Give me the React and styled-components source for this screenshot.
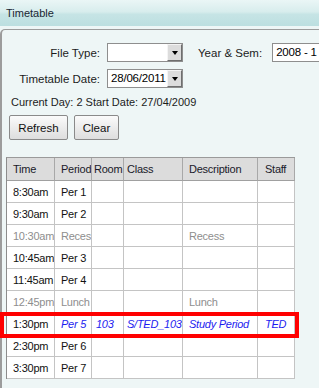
import styled, { createGlobalStyle } from 'styled-components';

const GlobalStyle = createGlobalStyle`
    html, body {
        margin: 0;
        padding: 0;
        background: #eef6f6;
        overflow: hidden;
    }
    body {
        font-family: "Liberation Sans", Arial, sans-serif;
        font-size: 11px;
        color: #1c1c1c;
    }
`;

const Page = styled.div`
    width: 319px;
    height: 388px;
    overflow: hidden;
`;

const TitleBar = styled.div`
    height: 26px;
    display: flex;
    align-items: center;
    padding-left: 6px;
    box-sizing: border-box;
    background: linear-gradient(#eaf6f6 0%, #d8eded 45%, #c6e4e5 55%, #bcdfe0 100%);
    color: #1a2633;
    font-size: 11px;
`;

const Panel = styled.div`
    margin-top: 3px;
    width: 360px;
    border: 1px solid #9c9c9c;
    border-left-width: 2px;
    border-right: none;
    border-bottom: none;
    border-radius: 5px 0 0 0;
    padding-top: 13px;
    height: 359px;
    box-sizing: border-box;
`;

const FormRow = styled.div`
    display: flex;
    align-items: center;
    gap: 7px;
    margin-bottom: 7px;
`;

const Label = styled.span`
    width: ${p => (p.$w ? `${p.$w}px` : 'auto')};
    text-align: right;
    margin-left: ${p => p.$ml || 0}px;
    margin-right: ${p => p.$mr || 0}px;
    white-space: nowrap;
    font-size: 11.5px;
`;

const SelectBox = styled.div`
    display: flex;
    width: ${p => p.$w}px;
    height: 19px;
    box-sizing: border-box;
    border: 1px solid #8e8e8e;
    background: #fff;
    flex-shrink: 0;
`;

const SelectValue = styled.div`
    flex: 1;
    padding-left: 3px;
    line-height: 17px;
    font-size: 11.5px;
    letter-spacing: -0.2px;
    color: #000;
    overflow: hidden;
    white-space: nowrap;
`;

const ArrowBtn = styled.div`
    width: 15px;
    box-sizing: border-box;
    border: 1px solid;
    border-color: #f4f4f4 #6e6e6e #6e6e6e #f4f4f4;
    background: #dcdcdc;
    display: flex;
    align-items: center;
    justify-content: center;

    &:after {
        content: "";
        border-left: 3.5px solid transparent;
        border-right: 3.5px solid transparent;
        border-top: 4px solid #000;
        margin-top: 1px;
    }
`;

const Select = ({ w, value }) => (
    <SelectBox $w={w}>
        <SelectValue>{value}</SelectValue>
        <ArrowBtn />
    </SelectBox>
);

const Info = styled.div`
    padding-left: 9px;
    margin-top: 7px;
    line-height: 14px;
    white-space: nowrap;
`;

const ButtonRow = styled.div`
    display: flex;
    gap: 6px;
    padding-left: 7px;
    margin-top: 6px;
`;

const Button = styled.button`
    height: 25px;
    width: ${p => p.$w}px;
    padding: 0;
    font-family: inherit;
    font-size: 11.5px;
    color: #111;
    border: 1px solid #8a8a8a;
    border-radius: 2px;
    background: linear-gradient(#fbfbfb, #ececec 50%, #dedede);
`;

const TableArea = styled.div`
    position: relative;
    margin-top: 17px;
`;

const TableClip = styled.div`
    margin-left: 4px;
    height: 222px;
    overflow: hidden;
`;

const Table = styled.table`
    border-collapse: separate;
    border-spacing: 0;
    table-layout: fixed;
    width: 289px;
    border-top: 1px solid #9a9a9a;
    border-left: 1px solid #8c8c8c;
    background: #fff;
`;

const Th = styled.th`
    height: 23px;
    box-sizing: border-box;
    padding: 0 0 0 ${p => p.$pad}px;
    text-align: left;
    font-weight: normal;
    font-size: 11px;
    letter-spacing: -0.25px;
    color: #1a1a2a;
    background: #dcdcdc;
    border-right: 1px solid #a8a8a8;
    border-bottom: 1px solid #a0a0a0;
    white-space: nowrap;
    overflow: hidden;
`;

const Td = styled.td`
    height: 22px;
    box-sizing: border-box;
    padding: 0 0 0 ${p => p.$pad}px;
    border-right: 1px solid #c4c4c4;
    border-bottom: 1px solid #c4c4c4;
    font-size: 11px;
    letter-spacing: -0.25px;
    white-space: nowrap;
    overflow: hidden;
    color: ${p => (p.$kind === 'break' ? '#8e8e8e' : p.$kind === 'class' ? '#1c1cf0' : '#111')};
    font-style: ${p => (p.$kind === 'class' ? 'italic' : 'normal')};
`;

const Highlight = styled.div`
    position: absolute;
    left: -2px;
    top: 155px;
    width: 299px;
    height: 26px;
    box-sizing: border-box;
    border: 4px solid #ff0000;
    pointer-events: none;
`;

const columns = [
    { title: 'Time', w: 48, head: 6, cell: 6 },
    { title: 'Period', w: 37, head: 6, cell: 6 },
    { title: 'Room', w: 32, head: 2, cell: 4 },
    { title: 'Class', w: 59, head: 3, cell: 3 },
    { title: 'Description', w: 75, head: 6, cell: 6 },
    { title: 'Staff', w: 37, head: 7, cell: 7 },
];

const rows = [
    ['8:30am', 'Per 1', '', '', '', ''],
    ['9:30am', 'Per 2', '', '', '', ''],
    ['10:30am', 'Recess', '', '', 'Recess', '', 'break'],
    ['10:45am', 'Per 3', '', '', '', ''],
    ['11:45am', 'Per 4', '', '', '', ''],
    ['12:45pm', 'Lunch', '', '', 'Lunch', '', 'break'],
    ['1:30pm', 'Per 5', '103', 'S/TED_103', 'Study Period', 'TED', 'class'],
    ['2:30pm', 'Per 6', '', '', '', ''],
    ['3:30pm', 'Per 7', '', '', '', ''],
];

const App = () => (
    <Page>
        <GlobalStyle />
        <TitleBar>Timetable</TitleBar>
        <Panel>
            <FormRow>
                <Label $w={98}>File Type:</Label>
                <Select w={76} value="" />
                <Label $ml={8} $mr={3}>Year &amp; Sem:</Label>
                <Select w={66} value="2008 - 1" />
            </FormRow>
            <FormRow>
                <Label $w={98}>Timetable Date:</Label>
                <Select w={76} value="28/06/2011" />
            </FormRow>
            <Info>Current Day: 2 Start Date: 27/04/2009</Info>
            <ButtonRow>
                <Button $w={59}>Refresh</Button>
                <Button $w={45}>Clear</Button>
            </ButtonRow>
            <TableArea>
                <TableClip>
                    <Table>
                        <colgroup>
                            {columns.map(c => <col key={c.title} style={{ width: c.w }} />)}
                        </colgroup>
                        <thead>
                            <tr>
                                {columns.map(c => <Th key={c.title} $pad={c.head}>{c.title}</Th>)}
                            </tr>
                        </thead>
                        <tbody>
                            {rows.map(r => (
                                <tr key={r[0]}>
                                    {r.slice(0, 6).map((cell, i) => (
                                        <Td
                                            key={i}
                                            $pad={columns[i].cell}
                                            $kind={i === 0 && r[6] === 'class' ? '' : r[6]}
                                        >
                                            {cell}
                                        </Td>
                                    ))}
                                </tr>
                            ))}
                        </tbody>
                    </Table>
                </TableClip>
                <Highlight />
            </TableArea>
        </Panel>
    </Page>
);

export default App;
